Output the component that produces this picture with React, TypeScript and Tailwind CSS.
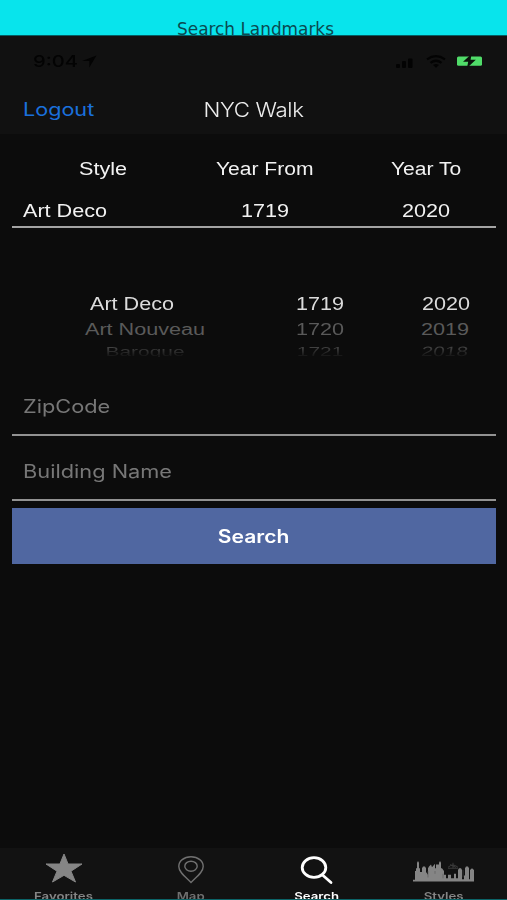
import type { ReactNode } from "react";

const sans = "font-['Liberation_Sans',sans-serif]";
const inter = "font-['Inter',sans-serif]";

function Stretch({ children, className = "" }: { children: ReactNode; className?: string }) {
  return <span className={`inline-block whitespace-nowrap ${className}`}>{children}</span>;
}

function StatusBar() {
  return (
    <div className="flex h-[50px] items-center pl-[33px] pr-[24px] text-[#030303]">
      <Stretch className={`${inter} w-[45px] origin-left scale-x-[1.22] text-[16.5px] font-medium leading-5`}>9:04</Stretch>
      <svg className="ml-[4px] h-[13px] w-[15px]" viewBox="0 0 15 13" fill="currentColor">
        <path d="M14.5 .5 0 6h7.3v6.5z" />
      </svg>
      <svg className="ml-auto mt-[2px] h-[11px] w-[18px]" viewBox="0 0 18 11" fill="currentColor">
        <rect x="0" y="7" width="4" height="4" rx="1" />
        <rect x="6" y="4" width="4" height="7" rx="1" />
        <rect x="12" y="1.5" width="4.5" height="9.5" rx="1" />
      </svg>
      <svg className="ml-[12px] h-[13px] w-[20px]" viewBox="0 0 20 13" fill="none" stroke="currentColor" strokeWidth="2.3">
        <path d="M1 4.4Q10-2 19 4.4M4.5 7.8Q10 3.7 15.5 7.8" />
        <path d="M7 10.1Q10 8 13 10.1L10 12.8z" fill="currentColor" stroke="none" />
      </svg>
      <svg className="ml-[10px] h-[14px] w-[27px]" viewBox="0 0 27 14">
        <rect x="1" y="2.4" width="25" height="9.4" rx="1.5" fill="#50dc69" />
        <path d="M15.5 0 7 7.8h5.2L11 14l8.8-8.2h-5.2z" fill="#0b120c" />
      </svg>
    </div>
  );
}

const wheelStyles = ["Art Deco", "Art Nouveau", "Baroque"];
const wheelFrom = ["1719", "1720", "1721"];
const wheelTo = ["2020", "2019", "2018"];

function Wheel({ items, className, shift, tilt }: { items: string[]; className: string; shift: string; tilt: string }) {
  return (
    <div className={`flex flex-col items-center ${className}`}>
      <div className="flex h-[28px] items-center">
        <Stretch className="scale-x-[1.2] text-[#dcdcdc]">{items[0]}</Stretch>
      </div>
      <div className="flex h-[24px] items-center">
        <Stretch className={`scale-x-[1.2] scale-y-[0.9] text-[#5a5a5a] ${shift}`}>{items[1]}</Stretch>
      </div>
      <div className="flex h-[16px] items-start px-4">
        <Stretch className={`-mt-px h-[18px] scale-x-[1.16] scale-y-[0.75] bg-linear-to-b from-[#424242] from-30% to-[#161616] to-95% bg-clip-text text-transparent ${shift} ${tilt}`}>
          {items[2]}
        </Stretch>
      </div>
    </div>
  );
}

function Tab({ label, color, children }: { label: string; color: string; children: ReactNode }) {
  return (
    <div className={`flex w-[127.5px] shrink-0 flex-col items-center ${color}`}>
      <div className="flex h-[40px] shrink-0 items-center justify-center">{children}</div>
      <Stretch className={`${inter} mt-px scale-x-[1.2] text-[11px] font-semibold leading-[14px]`}>{label}</Stretch>
    </div>
  );
}

export default function App() {
  return (
    <div className={`flex h-[900px] w-[507px] flex-col overflow-hidden bg-[#0c0c0c] text-[18px] leading-[22px] ${sans}`}>
      <header className="flex h-[36px] shrink-0 justify-center border-b border-[#045d63] bg-[#08e4ec] pl-[4px] pt-[18px]">
        <Stretch className="font-['DejaVu_Sans',sans-serif] text-[16.9px] leading-[22px] text-[#0a4a50]">Search Landmarks</Stretch>
      </header>
      <div className="h-[98px] shrink-0 bg-[#111111]">
        <StatusBar />
        <div className={`grid h-[47px] grid-cols-3 items-center ${inter}`}>
          <Stretch className="origin-left translate-x-[23px] scale-x-[1.2] text-[18px] text-[#1a70dc]">Logout</Stretch>
          <Stretch className="scale-x-[1.14] text-center text-[19.5px] font-light tracking-[-0.3px] text-[#eeeeee]">NYC Walk</Stretch>
        </div>
      </div>

      <main className="flex h-[714px] shrink-0 flex-col pl-[12px] pr-[11px]">
        <div className="flex h-[70px] items-center text-[#f2f2f2]">
          <div className="w-[182px] text-center"><Stretch className="scale-x-[1.2]">Style</Stretch></div>
          <div className="w-[141px] text-center"><Stretch className="scale-x-[1.17]">Year From</Stretch></div>
          <div className="w-[161px] pl-[21px] text-center"><Stretch className="scale-x-[1.17]">Year To</Stretch></div>
        </div>
        <div className="flex h-[24px] items-start border-b-2 border-[#a4a4a4] text-[#f2f2f2]">
          <div className="-mt-[4px] w-[182px] pl-[11px]"><Stretch className="origin-left scale-x-[1.2]">Art Deco</Stretch></div>
          <div className="-mt-[4px] w-[141px] pl-px text-center"><Stretch className="scale-x-[1.2]">1719</Stretch></div>
          <div className="-mt-[4px] w-[161px] pl-[21px] text-center"><Stretch className="scale-x-[1.2]">2020</Stretch></div>
        </div>

        <div className="flex h-[148px] pt-[62px]">
          <Wheel items={wheelStyles} className="ml-[21px] w-[200px]" shift="translate-x-[13px]" tilt="" />
          <Wheel items={wheelFrom} className="ml-[38px] w-[100px]" shift="" tilt="" />
          <Wheel items={wheelTo} className="ml-[27px] w-[100px]" shift="-translate-x-[1px]" tilt="-skew-x-6" />
        </div>

        <div className={`h-[60px] border-b-2 border-[#929292] pl-[11px] pt-[20px] ${inter}`}>
          <Stretch className="origin-left scale-x-[1.21] text-[#777]">ZipCode</Stretch>
        </div>
        <div className={`h-[65px] border-b-2 border-[#929292] pl-[11px] pt-[25px] ${inter}`}>
          <Stretch className="origin-left scale-x-[1.21] text-[#777]">Building Name</Stretch>
        </div>
        <button className={`mt-[7px] flex h-[56px] items-center justify-center bg-[#5067a1] pt-px text-white ${inter}`}>
          <Stretch className="scale-x-[1.17] font-semibold">Search</Stretch>
        </button>
      </main>

      <nav className="flex h-[52px] shrink-0 overflow-hidden border-b border-[#0b6468] bg-[#121212]">
        <div className="flex w-[510px] shrink-0 -space-x-px">
          <Tab label="Favorites" color="text-[#858585]">
            <svg className="h-[30px] w-[38px]" viewBox="0 0 38 30" fill="currentColor" stroke="currentColor" strokeLinejoin="round">
              <path d="m19 1 4.1 10H37L26 18.2 30.5 29 19 22.3 7.5 29 12 18.2 1 11h13.9z" />
            </svg>
          </Tab>
          <Tab label="Map" color="text-[#707070]">
            <svg className="mt-[3px] ml-px h-[29px] w-[28px]" viewBox="0 0 28 29" fill="none" stroke="currentColor" strokeWidth="1.4">
              <path d="M14 27.5C8 21.5 1.8 17 1.8 11.5S6.8 1.8 14 1.8s12.2 4.2 12.2 9.7S20 21.5 14 27.5z" />
              <ellipse cx="14" cy="11.2" rx="6.2" ry="5" />
            </svg>
          </Tab>
          <Tab label="Search" color="text-white">
            <svg className="mt-[4px] h-[29px] w-[34px]" viewBox="0 0 34 29" fill="none" stroke="currentColor" strokeWidth="2.8" strokeLinecap="round">
              <ellipse cx="14" cy="11.5" rx="11.8" ry="9.8" />
              <path d="m22.5 19 8.5 7.5" />
            </svg>
          </Tab>
          <Tab label="Styles" color="text-[#858585]">
            <svg className="mt-[5px] h-[22px] w-[61px]" viewBox="0 0 61 24" preserveAspectRatio="none" fill="currentColor">
              <path d="M0 23.5v-2h2V12h1V9h1V3l1-2 1 2v6h1v4h2V9l1-2h2l1 2v4l2 3V9l1-2 2-2 1 3 3-4v5h1V5h3V3l1-2 1 2v6h1l2 3v4h2v4h2v-4h3v4h3v-5h2v5h2v-9l1-2h2l1 2v10h2v-4h1V9l1-2h2l1 2v12h1V11l2-2 2 2v10h2v2.5z" />
              <path d="M35 8q5-5 10 0M37 5l6 3M40 3v6M35 9h10" fill="none" stroke="#3d3d3d" strokeWidth="1" />
              <path d="M15 12v7M22 12v3M30 15v5M50 11v8" fill="none" stroke="#555" strokeWidth=".6" />
            </svg>
          </Tab>
        </div>
      </nav>
    </div>
  );
}
